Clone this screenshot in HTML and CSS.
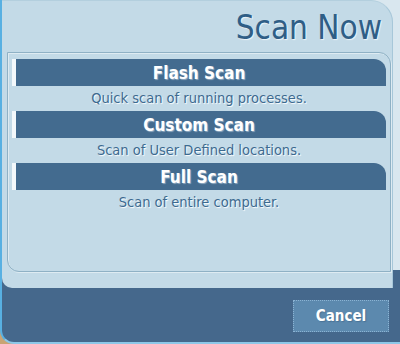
FILE: index.html
```html
<!DOCTYPE html>
<html>
<head>
<meta charset="utf-8">
<link rel="stylesheet" href="styles.css">
</head>
<body>
<div class="wrap">
  <div class="window">
    <div class="main">
      <div class="title">Scan Now</div>
      <div class="panel">
        <div class="row">
          <div class="head">Flash Scan</div>
          <div class="desc">Quick scan of running processes.</div>
        </div>
        <div class="row">
          <div class="head">Custom Scan</div>
          <div class="desc">Scan of User Defined locations.</div>
        </div>
        <div class="row">
          <div class="head">Full Scan</div>
          <div class="desc">Scan of entire computer.</div>
        </div>
      </div>
    </div>
    <div class="footer">
      <button class="btn">Cancel</button>
    </div>
  </div>
</div>
</body>
</html>
```
FILE: styles.css
```css
html, body {
  margin: 0;
  padding: 0;
  background: #d9e7ef;
}
.wrap {
  width: 400px;
  height: 344px;
  background: linear-gradient(to bottom, #d9e7ef 300px, #c9a474 300px);
  font-family: "DejaVu Sans Condensed", "DejaVu Sans", sans-serif;
}
.window {
  width: 400px;
  height: 344px;
  box-sizing: border-box;
  border-left: 2px solid #58b0e2;
  border-bottom: 2px solid #8dc7e8;
  border-bottom-left-radius: 14px;
  background: linear-gradient(to bottom, #d9e7ef 270px, #45688c 270px);
  display: flex;
  flex-direction: column;
  overflow: hidden;
}
.main {
  width: 391px;
  height: 288px;
  box-sizing: border-box;
  background: #c3dae7;
  border-top: 1px solid #b3cfde;
  border-right: 1px solid #a7c7d9;
  border-top-right-radius: 22px;
  border-bottom-left-radius: 10px;
  padding-top: 11px;
}
.title {
  height: 32px;
  font-size: 33px;
  line-height: 32px;
  text-align: right;
  padding-right: 10px;
  color: #2f5e86;
  text-shadow: 1px 1px 1px rgba(255, 255, 255, 0.7);
  margin-bottom: 8px;
}
.panel {
  margin-left: 5px;
  width: 384px;
  height: 220px;
  box-sizing: border-box;
  border: 1px solid #8fb1c5;
  border-top-right-radius: 12px;
  border-bottom-left-radius: 12px;
  box-shadow: inset 1px 1px 0 #deebf2, 1px 1px 0 #deebf2;
  padding: 6px 4px 0 4px;
}
.head {
  height: 27px;
  box-sizing: border-box;
  padding-top: 2px;
  line-height: 25px;
  font-size: 17px;
  font-weight: bold;
  color: #ffffff;
  text-align: center;
  background: linear-gradient(to right, #f3f8fb 4px, #436b8f 4px);
  border-top-right-radius: 12px;
  text-shadow: 1px 1px 1px rgba(200, 215, 228, 0.6);
}
.desc {
  height: 25px;
  line-height: 25px;
  font-size: 14.5px;
  color: #3c6a90;
  text-align: center;
  text-shadow: 1px 1px 1px #ffffff;
}
.footer {
  flex: 1;
  display: flex;
  justify-content: flex-end;
  align-items: flex-start;
  padding: 12px 11px 0 0;
}
.btn {
  width: 96px;
  height: 32px;
  box-sizing: border-box;
  margin: 0;
  padding: 0;
  background: #5c89ae;
  border: 1px dotted #8bb3d3;
  color: #ffffff;
  font-family: "DejaVu Sans Condensed", "DejaVu Sans", sans-serif;
  font-size: 15px;
  font-weight: bold;
  line-height: 30px;
  text-shadow: 1px 1px 1px rgba(62, 100, 135, 0.6);
}
```
